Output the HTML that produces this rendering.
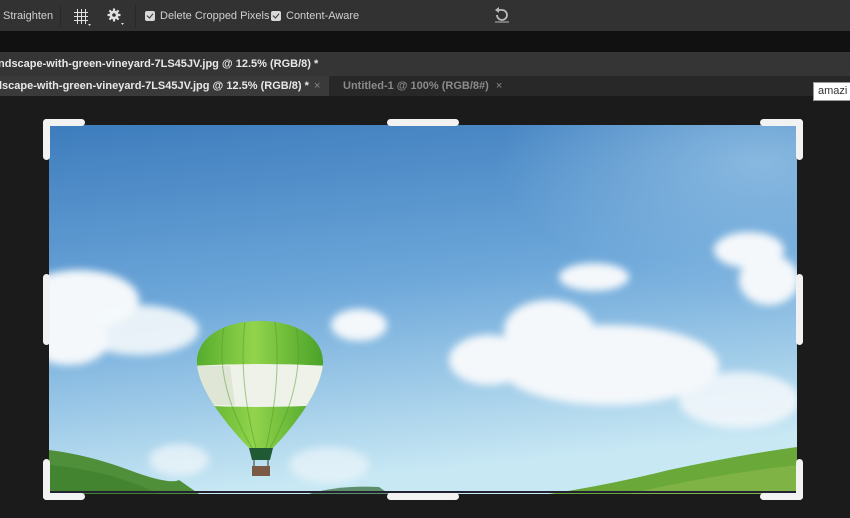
<!DOCTYPE html>
<html><head><meta charset="utf-8"><style>
body{margin:0;width:850px;height:518px;overflow:hidden;background:#1b1b1b;font-family:"Liberation Sans",sans-serif;position:relative}
.abs{position:absolute;white-space:nowrap}
#tb{left:0;top:0;width:850px;height:31px;background:#323232;color:#d0d0d0;font-size:11px}
#blk{left:0;top:31px;width:850px;height:21px;background:#111}
#title{left:0;top:52px;width:850px;height:24px;background:#353535;color:#e8e8e8;font-size:11px;font-weight:bold;line-height:24px}
#tabs{left:0;top:76px;width:850px;height:20px;background:#282828;font-size:11px;font-weight:bold;line-height:20px}
.sep{position:absolute;top:5px;width:1px;height:22px;background:#282828}
.cb{position:absolute;top:11px;width:10px;height:10px;background:#d8d8d8;border-radius:2px}
.cb:after{content:"";position:absolute;left:3px;top:1px;width:3px;height:5px;border:solid #333;border-width:0 1.5px 1.5px 0;transform:rotate(40deg)}
.h{position:absolute;background:#f2f2f2;border-radius:4px}
</style></head><body>
<div id="tb" class="abs">
<span class="abs" style="left:3px;top:10px">Straighten</span>
<div class="sep" style="left:60px"></div>
<svg class="abs" style="left:72px;top:7px" width="20" height="20" viewBox="0 0 20 20"><g stroke="#e0e0e0" stroke-width="1" fill="none"><path d="M2 5.5h14M2 9.5h14M2 13.5h14M5.5 2v15M9.5 2v15M13.5 2v15"/></g><path d="M16 17h3l-1.5 2z" fill="#ddd"/></svg>
<svg class="abs" style="left:107px;top:8px" width="18" height="18" viewBox="0 0 18 18"><circle cx="7" cy="7" r="4.5" fill="#e0e0e0"/><g stroke="#e0e0e0" stroke-width="2.2"><path d="M7 0.5v13M0.5 7h13M2.4 2.4l9.2 9.2M11.6 2.4l-9.2 9.2"/></g><circle cx="7" cy="7" r="1.8" fill="#323232"/><path d="M14 15h3l-1.5 2z" fill="#ddd"/></svg>
<div class="sep" style="left:135px"></div>
<div class="cb" style="left:145px"></div><span class="abs" style="left:160px;top:10px">Delete Cropped Pixels</span>
<div class="cb" style="left:271px"></div><span class="abs" style="left:286px;top:10px">Content-Aware</span>
<svg class="abs" style="left:492px;top:6px" width="20" height="18" viewBox="0 0 20 18"><path d="M5 9a5 5 0 1 0 5-5H6" stroke="#bbb" stroke-width="1.8" fill="none"/><path d="M7 1L3 4l4 3z" fill="#bbb"/><path d="M3 16h14" stroke="#bbb" stroke-width="1"/></svg>
</div>
<div id="blk" class="abs"></div>
<div id="title" class="abs"><span style="margin-left:-2px">ndscape-with-green-vineyard-7LS45JV.jpg @ 12.5% (RGB/8) *</span></div>
<div id="tabs" class="abs">
<div class="abs" style="left:0;top:0;width:329px;height:20px;background:#3a3a3a;color:#e8e8e8"><span style="margin-left:-1px">lscape-with-green-vineyard-7LS45JV.jpg @ 12.5% (RGB/8) *</span><span style="position:absolute;left:314px;color:#888;font-weight:normal">×</span></div>
<div class="abs" style="left:343px;top:0;color:#8a8a8a">Untitled-1 @ 100% (RGB/8#) <span style="font-weight:normal;margin-left:4px">×</span></div>
</div>
<div class="abs" style="left:813px;top:82px;width:40px;height:17px;background:#fff;border:1px solid #999;font-size:11px;line-height:17px;padding-left:4px;color:#333">amazi</div>
<svg class="abs" style="left:49px;top:125px" width="748" height="369" viewBox="0 0 748 369">
<defs>
<linearGradient id="sky" x1="0" y1="0" x2="0.2" y2="1"><stop offset="0" stop-color="#3d7cbd"/><stop offset="0.5" stop-color="#6ea8da"/><stop offset="1" stop-color="#c8e8f4"/></linearGradient>
<radialGradient id="lt" cx="0.95" cy="0.1" r="0.35"><stop offset="0" stop-color="#9cc8e8" stop-opacity=".7"/><stop offset="1" stop-color="#9cc8e8" stop-opacity="0"/></radialGradient>
<filter id="b" x="-30%" y="-30%" width="160%" height="160%"><feGaussianBlur stdDeviation="4"/></filter>
</defs>
<rect width="748" height="369" fill="url(#sky)"/>
<rect width="748" height="369" fill="url(#lt)"/>
<g fill="#f4f8fb" filter="url(#b)">
<ellipse cx="30" cy="175" rx="60" ry="30"/><ellipse cx="90" cy="205" rx="60" ry="25" opacity=".9"/><ellipse cx="20" cy="215" rx="40" ry="25"/>
<ellipse cx="310" cy="200" rx="28" ry="16"/>
<ellipse cx="545" cy="152" rx="35" ry="14"/>
<ellipse cx="700" cy="125" rx="35" ry="18"/><ellipse cx="720" cy="155" rx="30" ry="25"/>
<ellipse cx="500" cy="205" rx="45" ry="30"/><ellipse cx="560" cy="240" rx="110" ry="40"/><ellipse cx="440" cy="235" rx="40" ry="25"/><ellipse cx="690" cy="275" rx="60" ry="28" opacity=".85"/>
<ellipse cx="130" cy="335" rx="30" ry="16" opacity=".7"/><ellipse cx="280" cy="340" rx="40" ry="18" opacity=".6"/>
</g>
<path d="M0 325 Q40 330 80 345 T130 355 L150 369 L0 369Z" fill="#4f8f3a"/>
<path d="M0 340 Q60 345 110 369 L0 369Z" fill="#3f7f2e" opacity=".7"/>
<path d="M500 369 Q560 360 620 345 Q690 330 748 322 L748 369Z" fill="#6aa83a"/>
<path d="M580 369 Q660 350 748 340 L748 369Z" fill="#8ab84a" opacity=".7"/>
<path d="M260 369 Q290 360 330 362 L340 369Z" fill="#5d8f6c"/>
<path d="M0 367 H748" stroke="#223" stroke-width="2"/>
</svg>
<svg class="abs" style="left:0;top:0" width="850" height="518" viewBox="0 0 850 518">
<defs>
<linearGradient id="g2" x1="0" x2="1"><stop offset="0" stop-color="#56ac2c"/><stop offset="0.45" stop-color="#92d44c"/><stop offset="1" stop-color="#4aa228"/></linearGradient>
<clipPath id="env"><path d="M260 321 C300 321 324 340 323 363 C322 388 298 422 273 448 L249 448 C224 422 198 388 197 363 C196 340 220 321 260 321Z"/></clipPath>
</defs>
<path d="M260 321 C300 321 324 340 323 363 C322 388 298 422 273 448 L249 448 C224 422 198 388 197 363 C196 340 220 321 260 321Z" fill="url(#g2)"/>
<g clip-path="url(#env)">
<path d="M190 366 Q260 362 330 366 L330 405 Q260 409 190 405Z" fill="#eef2e8"/>
<path d="M190 366 L230 366 L235 405 L190 405Z" fill="#dfe6d6"/>
<g stroke="#4e9a28" stroke-width="1" opacity=".5" fill="none"><path d="M225 322 Q212 380 252 448M245 321 Q238 380 256 448M275 321 Q282 380 266 448M295 322 Q308 380 270 448"/></g>
</g>
<path d="M249 448 L273 448 L270 460 L252 460Z" fill="#1f5a35"/>
<path d="M254 460 L254 466 M268 460 L268 466" stroke="#333" stroke-width="1"/>
<rect x="252" y="466" width="18" height="10" fill="#7a5a44"/>
</svg>
<div class="h" style="left:43px;top:119px;width:42px;height:7px"></div>
<div class="h" style="left:43px;top:119px;width:7px;height:41px"></div>
<div class="h" style="left:387px;top:119px;width:72px;height:7px"></div>
<div class="h" style="left:760px;top:119px;width:43px;height:7px"></div>
<div class="h" style="left:796px;top:119px;width:7px;height:41px"></div>
<div class="h" style="left:43px;top:274px;width:7px;height:71px"></div>
<div class="h" style="left:796px;top:274px;width:7px;height:71px"></div>
<div class="h" style="left:43px;top:459px;width:7px;height:41px"></div>
<div class="h" style="left:43px;top:493px;width:42px;height:7px"></div>
<div class="h" style="left:387px;top:493px;width:72px;height:7px"></div>
<div class="h" style="left:760px;top:493px;width:43px;height:7px"></div>
<div class="h" style="left:796px;top:459px;width:7px;height:41px"></div>
</body></html>
